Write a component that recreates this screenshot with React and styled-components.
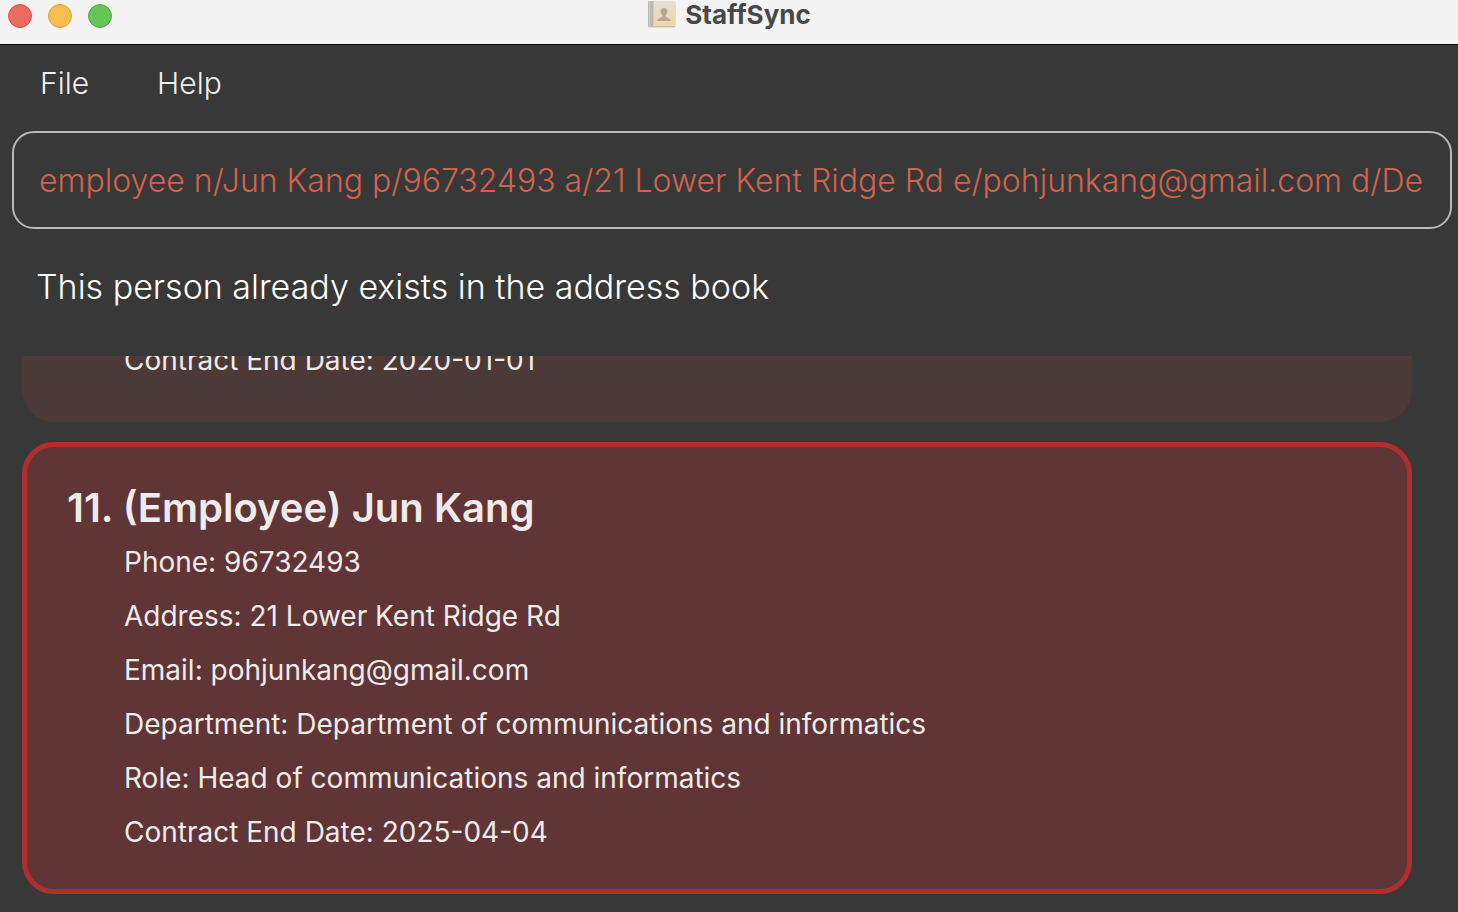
import React, { useState } from "react";
import styled, { createGlobalStyle } from "styled-components";

const GlobalStyle = createGlobalStyle`
  *, *::before, *::after { box-sizing: border-box; }
  body {
    margin: 0;
    background: #383838;
    color: #ffffff;
    font-family: Inter, "Liberation Sans", sans-serif;
    font-weight: 300;
  }
`;

const Window = styled.div`
  display: flex;
  flex-direction: column;
  height: 100vh;
  overflow: hidden;
`;

const TitleBar = styled.header`
  display: grid;
  grid-template-columns: 1fr auto 1fr;
  align-items: start;
  height: 45px;
  padding: 0 8px;
  background: #f4f4f4;
  border-bottom: 1px solid #0c0c0c;
`;

const WindowControls = styled.div`
  display: flex;
  gap: 16px;
  padding-top: 4px;
`;

const ControlDot = styled.button`
  width: 24px;
  height: 24px;
  padding: 0;
  border: 1px solid ${(p) => p.$edge};
  border-radius: 50%;
  background: ${(p) => p.$fill};
`;

const AppTitle = styled.h1`
  display: flex;
  align-items: center;
  gap: 8px;
  margin: 0;
  color: #484848;
  font-size: 26px;
  font-weight: 700;
  line-height: 30px;
`;

const MenuBar = styled.nav`
  display: flex;
  gap: 52px;
  padding: 15px 32px 17px;
`;

const MenuButton = styled.button`
  padding: 0 8px;
  border: 0;
  background: none;
  color: #f0f0f0;
  font: inherit;
  font-size: 30px;
  line-height: 46px;
`;

const CommandInput = styled.input`
  height: 98px;
  margin: 8px 6px 0 12px;
  padding: 0 25px;
  border: 2px solid #bababa;
  border-radius: 22px;
  outline: none;
  background: transparent;
  color: #d0634d;
  font: inherit;
  font-size: 32px;
  font-weight: 350;
`;

const ResultMessage = styled.output`
  display: block;
  padding: 34px 36px 45px;
  font-size: 34px;
  line-height: 48px;
`;

const PersonList = styled.ol`
  display: flex;
  flex: 1;
  flex-direction: column;
  justify-content: flex-end;
  gap: 20px;
  min-height: 0;
  margin: 0;
  padding: 0 46px 18px 22px;
  overflow: hidden;
  list-style: none;
`;

const PersonCard = styled.li`
  flex: none;
  padding: 34px 40px 30px;
  border: 5px solid ${(p) => (p.$selected ? "#b02e2e" : "transparent")};
  border-radius: 32px;
  background: ${(p) => (p.$selected ? "#5f3535" : "#4c3a39")};
  color: #f0ebeb;
`;

const PersonName = styled.h2`
  margin: 0;
  font-size: 40px;
  font-weight: 600;
  line-height: 54px;
`;

const PersonField = styled.p`
  margin: 0;
  padding-left: 57px;
  font-size: 28px;
  font-weight: 400;
  line-height: 54px;
`;

function ContactBookIcon() {
  return (
    <svg width="30" height="30" viewBox="0 0 30 30" aria-hidden="true">
      <defs>
        <linearGradient id="cover" x1="0" y1="0" x2="0" y2="1">
          <stop offset="0" stopColor="#e6dfd0" />
          <stop offset="1" stopColor="#ecd6ab" />
        </linearGradient>
      </defs>
      <rect x="1" y="2" width="28" height="26" rx="2" fill="#dedede" />
      <rect x="1" y="1" width="27" height="26" rx="1" fill="url(#cover)" />
      <rect x="1" y="1" width="5" height="26" rx="1" fill="#bdb9b7" />
      <path d="M2.500 1v26" stroke="#cdc9c6" />
      <path d="M6.500 1v26" stroke="#d7cbb6" />
      <path d="M6 26.500h22" stroke="#cfbd98" />
      <path
        d="M17 8c-2.400 0-3.500 1.600-3.300 3.700.1 1.600.8 2.700 1.600 3.500v1.300c-.8 1.200-4.500 1.400-5.300 4.500h14c-.8-3.100-4.500-3.300-5.300-4.500v-1.300c.8-.8 1.500-1.900 1.600-3.500C20.500 9.600 19.400 8 17 8Z"
        fill="#b2a996"
      />
    </svg>
  );
}

const people = [
  { id: 10, fields: ["Contract End Date: 2020-01-01"] },
  {
    id: 11,
    name: "11. (Employee) Jun Kang",
    selected: true,
    fields: [
      "Phone: 96732493",
      "Address: 21 Lower Kent Ridge Rd",
      "Email: pohjunkang@gmail.com",
      "Department: Department of communications and informatics",
      "Role: Head of communications and informatics",
      "Contract End Date: 2025-04-04",
    ],
  },
];

export default function App() {
  const [command, setCommand] = useState(
    "employee n/Jun Kang p/96732493 a/21 Lower Kent Ridge Rd e/pohjunkang@gmail.com d/Department"
  );

  return (
    <>
      <GlobalStyle />
      <Window>
        <TitleBar>
          <WindowControls>
            <ControlDot aria-label="Close" $fill="#ec6a5e" $edge="#d9544a" />
            <ControlDot aria-label="Minimize" $fill="#f4bf4f" $edge="#d9a33c" />
            <ControlDot aria-label="Zoom" $fill="#61c654" $edge="#50aa3f" />
          </WindowControls>
          <AppTitle>
            <ContactBookIcon />
            StaffSync
          </AppTitle>
        </TitleBar>
        <MenuBar>
          <MenuButton>File</MenuButton>
          <MenuButton>Help</MenuButton>
        </MenuBar>
        <CommandInput
          aria-label="Command"
          spellCheck={false}
          value={command}
          onChange={(e) => setCommand(e.target.value)}
        />
        <ResultMessage>This person already exists in the address book</ResultMessage>
        <PersonList>
          {people.map((person) => (
            <PersonCard key={person.id} $selected={person.selected}>
              {person.name && <PersonName>{person.name}</PersonName>}
              {person.fields.map((field) => (
                <PersonField key={field}>{field}</PersonField>
              ))}
            </PersonCard>
          ))}
        </PersonList>
      </Window>
    </>
  );
}
